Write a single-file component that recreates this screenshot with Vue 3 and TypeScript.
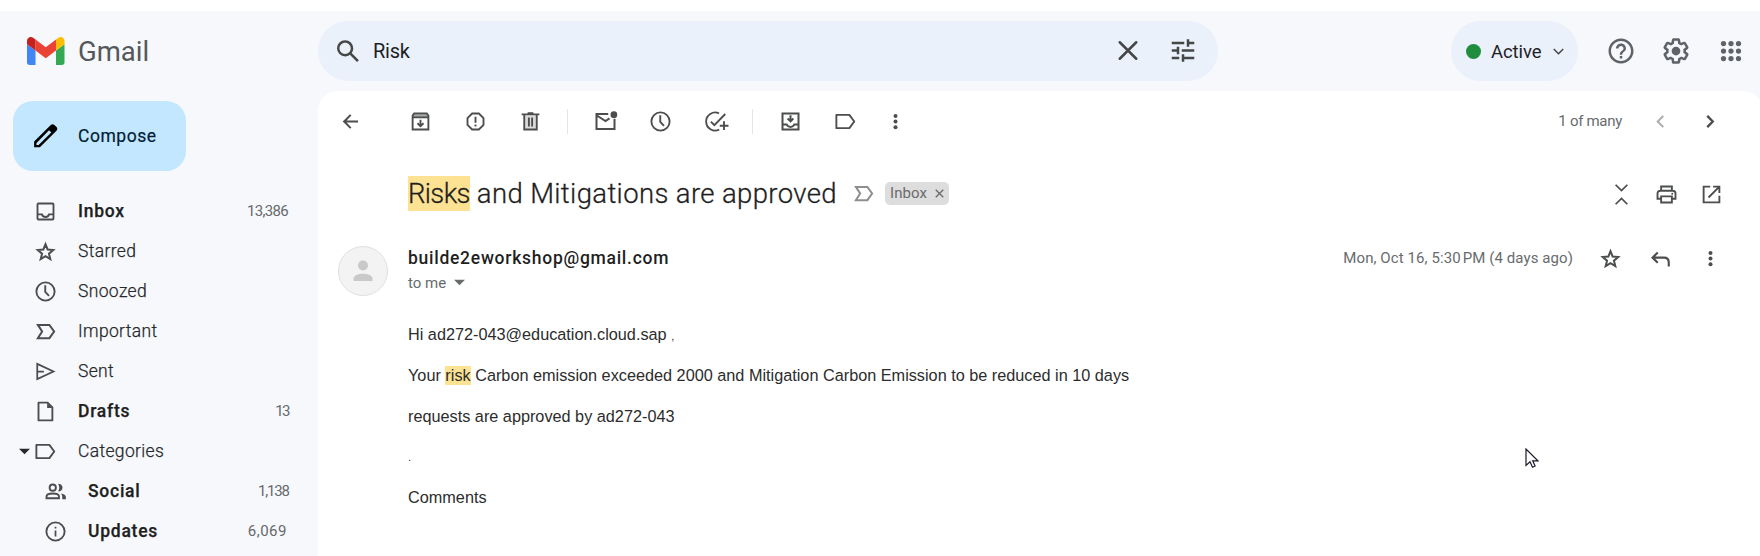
<script setup lang="ts">
import { h, type FunctionalComponent } from 'vue'

const stroke = (inner: string, w = 1.5) =>
  `<g fill="none" stroke="currentColor" stroke-width="${w}">${inner}</g>`

// Small glyphs are drawn on a 20-unit grid, header glyphs on a 24-unit grid.
const small: Record<string, string> = {
  inbox: stroke('<rect x="3.6" y="3.6" width="12.8" height="12.8" rx=".8"/><path d="M3.6 12.3h3.6c.4 1.4 1.4 2.1 2.8 2.1s2.4-.7 2.8-2.1h3.6"/>'),
  star: stroke('<path d="M10 4.2l1.7 4.2 4.5.35-3.45 2.95 1.1 4.4L10 13.7l-3.85 2.4 1.1-4.4L3.8 8.75l4.5-.35z"/>', 1.6),
  clock: stroke('<circle cx="10" cy="10" r="7.3"/><path d="M9.8 5v5.3l3 3.2"/>'),
  important: stroke('<path d="M3.9 4.7h9.2l3.8 5.3-3.8 5.3H3.9L7.3 10z"/>', 1.6),
  sent: stroke('<path d="M3.4 3.9L16.4 10 3.4 16.1zM3.4 10h5.3"/>', 1.4),
  draft: stroke('<path d="M4.4 2.9h7.3l3.8 3.8v10.4H4.4z" stroke-linejoin="round"/><path d="M11.3 2.9v4.2h4.2z" fill="currentColor" stroke="none"/>'),
  label: stroke('<path d="M2.7 4.7h10.4l3.9 5.3-3.9 5.3H2.7z" stroke-linejoin="round"/>'),
  people: stroke('<circle cx="7.8" cy="6.9" r="2.5"/><path d="M2.8 15.4v-1.3c0-1.7 2.7-2.5 5-2.5s5 .8 5 2.5v1.3z"/>') + '<path d="M12.1 3.8c2 0 3.5 1.3 3.5 3.1s-1.5 3.1-3.5 3.1c1.2-1.9 1.2-4.3 0-6.2zM14.3 11.6c2.4.4 4 1.3 4 2.7v1.8h-2.9v-1.8c0-1.1-.4-2-1.1-2.7z" fill="currentColor"/>',
  info: stroke('<circle cx="10" cy="10" r="7.3"/>') + '<path d="M9.3 9.2h1.4V14H9.3zM9.3 6.2h1.4v1.4H9.3z" fill="currentColor"/>',
  back: stroke('<path d="M16 10H4.8M10.2 4.7L4.9 10l5.3 5.3"/>', 1.6),
  archive: '<path d="M3.6 5l1-1.7h10.8l1 1.7v1.5H3.6z" fill="currentColor" opacity=".5"/>' + stroke('<path d="M3.7 5.2l1.3-1.7h10l1.3 1.7v11.2H3.7zM3.7 6.7h12.6M10 8.5v5M7.6 11.4L10 13.7l2.4-2.3"/>', 1.5),
  spam: stroke('<path d="M7.3 3.6h5.4l3.7 3.7v5.4l-3.7 3.7H7.3l-3.7-3.7V7.3z"/><path d="M10 6.2v4.8M10 12.4v1.5"/>', 1.5),
  trash: '<path d="M5 5h10v11H5z" fill="currentColor" opacity=".2"/>' + stroke('<path d="M2.9 4.3h14.2M7.7 3.4h4.6M5 4.3v12.1h10V4.3M8.7 6.7v7.2M11.3 6.7v7.2"/>', 1.5),
  unread: stroke('<path d="M12.2 4H2.8v12h14.4V7.7M2.8 5l7.2 4.6L13.2 7.5"/>', 1.6) + '<circle cx="16.7" cy="4.5" r="2.7" fill="currentColor"/>',
  task: stroke('<path d="M12.8 3.5A7.2 7.2 0 1 0 13 16.4M6.3 10.1l2.8 2.8L17.8 4M16.8 9.8v7M13.4 13.4h7"/>', 1.5),
  move: stroke('<rect x="3.6" y="3.6" width="12.8" height="12.8"/><path d="M3.6 12.4h3.4c.5 1.3 1.5 1.9 3 1.9s2.5-.6 3-1.9h3.4M10 4.9v4.5M7.7 7.6L10 9.8l2.3-2.2"/>', 1.6),
  more: '<g fill="currentColor"><circle cx="10" cy="5.5" r="1.6"/><circle cx="10" cy="10" r="1.6"/><circle cx="10" cy="14.5" r="1.6"/></g>',
  prev: stroke('<path d="M12.2 5.5L7.8 10l4.4 4.5"/>', 1.7),
  next: stroke('<path d="M7.4 5.5l4.4 4.5L7.4 14.5"/>', 1.9),
  collapse: stroke('<path d="M5.3 2.2L10 6.9l4.7-4.7M5.3 17.8L10 13.1l4.7 4.7"/>', 1.4),
  print: stroke('<path d="M5.7 7V3.6h8.6V7M5.7 13.4H2.8V9.2C2.8 7.9 3.7 7 5 7h10c1.3 0 2.2.9 2.2 2.2v4.2h-2.9M5.7 11.5h8.6v4.9H5.7z"/>', 1.5) + '<circle cx="14.6" cy="9.3" r=".8" fill="currentColor"/>',
  open: stroke('<path d="M9 3.7H3.7v12.6h12.6V11M11.3 3.7h5v5M16.3 3.7L7.6 12.4"/>', 1.5),
  reply: stroke('<path d="M7.8 5.2L3.6 9.3l4.2 4.1M3.6 9.3h9.2c2.3 0 3.8 1.5 3.8 3.8v3.2"/>', 1.7),
  caret: '<path d="M5.6 7.8h8.8L10 12.2z" fill="currentColor"/>',
  times: stroke('<path d="M7 7l6 6M13 7l-6 6"/>', 1.1),
  chevron: stroke('<path d="M6.2 8l3.8 3.8L13.8 8"/>', 1.2),
}

const large: Record<string, string> = {
  search: '<path d="M20.49 19l-5.73-5.73C15.53 12.2 16 10.91 16 9.5A6.5 6.5 0 1 0 9.5 16c1.41 0 2.7-.47 3.77-1.24L19 20.49 20.49 19zM5 9.5C5 7.01 7.01 5 9.5 5S14 7.01 14 9.5 11.99 14 9.5 14 5 11.99 5 9.5z" transform="translate(.2 .3)"/>',
  close: '<path d="M5.4 5l13.2 13.2M18.6 5L5.4 18.2" fill="none" stroke="currentColor" stroke-width="2" stroke-linecap="round"/>',
  tune: '<path d="M3 17v2h6v-2H3zM3 5v2h10V5H3zm10 16v-2h8v-2h-8v-2h-2v6h2zM7 9v2H3v2h4v2h2V9H7zm14 4v-2H11v2h10zm-6-4h2V7h4V5h-4V3h-2v6z" transform="translate(0 -.4)"/>',
  help: '<path d="M11 18h2v-2h-2v2zm1-16C6.48 2 2 6.48 2 12s4.48 10 10 10 10-4.48 10-10S17.52 2 12 2zm0 18c-4.41 0-8-3.59-8-8s3.59-8 8-8 8 3.59 8 8-3.59 8-8 8zm0-14c-2.21 0-4 1.79-4 4h2c0-1.1.9-2 2-2s2 .9 2 2c0 2-3 1.75-3 5h2c0-2.25 3-2.5 3-5 0-2.21-1.79-4-4-4z"/>',
  settings: '<path d="M13.85 22.25h-3.7c-.74 0-1.36-.54-1.45-1.27l-.27-1.89c-.27-.14-.53-.29-.79-.46l-1.8.72c-.7.26-1.47-.03-1.81-.65L2.2 15.53c-.35-.66-.2-1.44.36-1.88l1.53-1.19c-.01-.15-.02-.3-.02-.46 0-.15.01-.31.02-.46l-1.52-1.19c-.59-.45-.74-1.26-.37-1.88l1.85-3.19c.34-.62 1.11-.9 1.79-.63l1.81.73c.26-.17.52-.32.78-.46l.27-1.91c.09-.7.71-1.25 1.44-1.25h3.7c.74 0 1.36.54 1.45 1.27l.27 1.89c.27.14.53.29.79.46l1.8-.72c.71-.26 1.48.03 1.82.65l1.84 3.18c.36.66.2 1.44-.36 1.88l-1.52 1.19c.01.15.02.3.02.46s-.01.31-.02.46l1.52 1.19c.56.45.72 1.23.37 1.86l-1.86 3.22c-.34.62-1.11.9-1.8.63l-1.8-.72c-.26.17-.52.32-.78.46l-.27 1.91c-.1.68-.72 1.22-1.46 1.22zm-3.23-2h2.76l.37-2.55.53-.22c.44-.18.88-.44 1.34-.78l.45-.34 2.38.96 1.38-2.4-2.03-1.58.07-.56c.03-.26.06-.51.06-.78s-.03-.53-.06-.78l-.07-.56 2.03-1.58-1.39-2.4-2.39.96-.45-.35c-.42-.32-.87-.58-1.33-.77l-.52-.22-.37-2.55h-2.76l-.37 2.55-.53.21c-.44.19-.88.44-1.34.79l-.45.33-2.38-.95-1.39 2.39 2.03 1.58-.07.56a7 7 0 0 0-.06.79c0 .26.02.53.06.78l.07.56-2.03 1.58 1.38 2.4 2.39-.96.45.35c.43.33.86.58 1.33.77l.53.22.38 2.55z"/><circle cx="12" cy="12" r="3.5"/>',
  apps: [6, 12, 18].map(y => [6, 12, 18].map(x => `<circle cx="${x}" cy="${y}" r="2.1"/>`).join('')).join(''),
}

const Icon: FunctionalComponent<{ name: string; size?: number }> = (props) => {
  const isLarge = props.name in large
  const px = props.size ?? (isLarge ? 30 : 25)
  return h('svg', {
    width: px,
    height: px,
    viewBox: isLarge ? '0 0 24 24' : '0 0 20 20',
    fill: 'currentColor',
    overflow: 'visible',
    innerHTML: isLarge ? large[props.name] : small[props.name],
  })
}
Icon.props = ['name', 'size']

interface Folder {
  icon: string
  label: string
  count?: string
  countTracking?: number
  bold?: boolean
  nested?: boolean
  open?: boolean
}

const folders: Folder[] = [
  { icon: 'inbox', label: 'Inbox', count: '13,386', countTracking: -0.65, bold: true },
  { icon: 'star', label: 'Starred' },
  { icon: 'clock', label: 'Snoozed' },
  { icon: 'important', label: 'Important' },
  { icon: 'sent', label: 'Sent' },
  { icon: 'draft', label: 'Drafts', count: '13', countTracking: -1.5, bold: true },
  { icon: 'label', label: 'Categories', open: true },
  { icon: 'people', label: 'Social', count: '1,138', countTracking: -1.2, bold: true, nested: true },
  { icon: 'info', label: 'Updates', count: '6,069', countTracking: 0.5, bold: true, nested: true },
]
</script>

<template>
  <div class="app">
    <header class="header">
      <div class="brand">
        <svg class="logo" viewBox="52 42 88 66" preserveAspectRatio="none">
          <path fill="#4285f4" d="M58 108h14V74L52 59v43c0 3.32 2.69 6 6 6" />
          <path fill="#34a853" d="M120 108h14c3.32 0 6-2.69 6-6V59l-20 15" />
          <path fill="#fbbc04" d="M120 48v26l20-15v-8c0-7.42-8.47-11.65-14.4-7.2" />
          <path fill="#ea4335" d="M72 74V48l24 18 24-18v26L96 92" />
          <path fill="#c5221f" d="M52 51v8l20 15V48l-5.6-4.2c-5.94-4.45-14.4-.22-14.4 7.2" />
        </svg>
        <span class="wordmark">Gmail</span>
      </div>
      <div class="search">
        <Icon name="search" />
        <span class="query">Risk</span>
        <Icon name="close" class="clear" />
        <Icon name="tune" />
      </div>
      <div class="status">
        <i class="dot"></i>
        <span class="status-text">Active</span>
        <Icon name="chevron" />
      </div>
      <div class="tools">
        <Icon name="help" /><Icon name="settings" /><Icon name="apps" />
      </div>
    </header>

    <div class="body">
      <nav class="sidebar">
        <button class="compose">
          <svg width="30" height="30" viewBox="0 0 24 24">
            <path fill="#000" d="M20.4 4.8L18.7 3.1c-.8-.8-2.1-.8-2.9 0L2.5 16.4V21h4.6L20.4 7.7c.8-.8.8-2.1 0-2.9z" />
            <path fill="#c2e7ff" d="M6.1 19.2H4.4v-1.7L14.5 7.4l1.7 1.7z" />
          </svg>
          <span>Compose</span>
        </button>
        <div v-for="f in folders" :key="f.label" class="folder" :class="{ bold: f.bold, nested: f.nested }">
          <Icon v-if="f.open" name="caret" class="expander" />
          <Icon :name="f.icon" class="folder-icon" />
          <span class="name">{{ f.label }}</span>
          <span
            v-if="f.count"
            class="count"
            :style="{ letterSpacing: `${f.countTracking}px`, marginRight: `${f.countTracking}px` }"
          >{{ f.count }}</span>
        </div>
      </nav>

      <main class="main">
        <div class="toolbar">
          <Icon name="back" class="go-back" />
          <div class="group"><Icon name="archive" /><Icon name="spam" /><Icon name="trash" /></div>
          <div class="group"><Icon name="unread" /><Icon name="clock" /><Icon name="task" /></div>
          <div class="group"><Icon name="move" /><Icon name="label" /><Icon name="more" class="kebab" /></div>
          <span class="pager">1 of many</span>
          <Icon name="prev" class="prev" />
          <Icon name="next" class="next" />
        </div>

        <div class="subject">
          <h1><mark>Risks</mark> and Mitigations are approved</h1>
          <Icon name="important" class="marker" />
          <span class="chip"><span>Inbox</span><Icon name="times" /></span>
          <div class="actions"><Icon name="collapse" /><Icon name="print" /><Icon name="open" /></div>
        </div>

        <div class="sender">
          <div class="avatar">
            <svg width="20" height="22" viewBox="0 0 20 22" fill="#c9c9c9">
              <circle cx="10" cy="5.5" r="5" /><path d="M.5 21v-2.5c0-3 5-4.8 9.5-4.8s9.5 1.8 9.5 4.8V21z" />
            </svg>
          </div>
          <div class="who">
            <div class="from">builde2eworkshop@gmail.com</div>
            <div class="to"><span>to me</span><Icon name="caret" /></div>
          </div>
          <span class="date">Mon, Oct 16, 5:30&#8239;PM (4 days ago)</span>
          <div class="mail-tools"><Icon name="star" /><Icon name="reply" /><Icon name="more" /></div>
        </div>

        <div class="message">
          <p>Hi ad272-043@education.cloud.sap <small>,</small></p>
          <p>Your <mark>risk</mark> Carbon emission exceeded 2000 and Mitigation Carbon Emission to be reduced in 10 days</p>
          <p>requests are approved by ad272-043</p>
          <p class="minor"><small>.</small></p>
          <p>Comments</p>
        </div>
      </main>
    </div>

    <svg class="pointer" width="14" height="22" viewBox="0 0 14 22">
      <path d="M1 1v16.500l4-3.700 2.500 5.400 2.600-1.200-2.400-5.200h5.200z" fill="#fff" stroke="#1a1a2a" stroke-width="1.200" />
    </svg>
  </div>
</template>

<style>
body { margin: 0; overflow: hidden; background: #fff; }
</style>

<style scoped>
.app {
  position: relative;
  box-sizing: border-box;
  width: 1760px;
  height: 556px;
  padding-top: 11px;
  overflow: hidden;
  font-family: Roboto, "Liberation Sans", sans-serif;
  color: #4b4e4d;
  background: linear-gradient(#fff 11px, #f6f8fc 11px);
}
svg { display: block; flex: none; }
.header { display: flex; align-items: center; height: 80px; color: #444746; }
.brand { display: flex; align-items: center; width: 291px; padding-left: 27px; }
.logo { width: 37.5px; height: 28px; }
.wordmark { margin-left: 13.5px; font-size: 27.5px; color: #55585a; }
.search {
  display: flex; align-items: center; box-sizing: border-box;
  width: 900px; height: 60px; padding: 0 20px 0 15px;
  border-radius: 30px; background: #eaf1fb;
}
.query { flex: 1; margin-left: 10px; font-size: 20px; letter-spacing: -.25px; color: #1f1f1f; }
.clear { margin-right: 25px; }
.status {
  display: flex; align-items: center; box-sizing: border-box;
  width: 127px; height: 60px; margin-left: 233px; padding-left: 15px;
  border-radius: 30px; background: #eaf1fb;
}
.dot { width: 15px; height: 15px; border-radius: 50%; background: #1e8e3e; }
.status-text { width: 53px; margin: 1px 1.5px 0 10px; font-size: 18.5px; letter-spacing: -.1px; color: #1f1f1f; }
.tools { display: flex; gap: 25px; margin-left: 28px; color: #5f6368; }

.body { display: flex; height: 465px; }
.sidebar { width: 318px; flex: none; box-sizing: border-box; padding-top: 10px; }
.compose {
  display: flex; align-items: center; width: 173px; height: 70px;
  margin: 0 0 20px 13px; padding: 0 0 0 18px; border: 0; border-radius: 20px;
  background: #c2e7ff; color: #001d35; font: 400 17.5px Roboto, sans-serif; letter-spacing: .55px;
  -webkit-text-stroke: .2px;
}
.compose span { margin-left: 17px; }
.folder { position: relative; display: flex; align-items: center; height: 40px; padding: 0 30.5px 0 33px; font-size: 17.5px; color: #26282a; }
.folder.nested { padding-left: 43px; }
.folder-icon { color: #4b4e4d; }
.name { margin-left: 20px; font-weight: 300; letter-spacing: .35px; -webkit-text-stroke: .25px; }
.bold .name { font-weight: 500; letter-spacing: .75px; color: #1f1f1f; }
.expander { position: absolute; left: 12px; }
.count { margin-left: auto; font-size: 15px; color: #66696c; }

.main { flex: 1; min-width: 0; margin-right: -3px; border-radius: 20px 20px 0 0; background: #fff; }
.toolbar { display: flex; align-items: center; height: 60px; padding-left: 20px; }
.go-back { margin-right: 27.5px; }
.group { display: flex; align-items: center; gap: 30px; padding: 0 24.5px 0 17px; }
.group + .group { border-left: 1px solid #e3e5e8; height: 25px; padding-left: 25px; padding-right: 24px; }
.kebab { margin-left: -5px; }
.pager { margin-left: auto; font-size: 15px; letter-spacing: -.3px; color: #686b6d; }
.prev { margin-left: 26px; opacity: .45; }
.next { margin: 0 40px 0 25px; }

.subject { display: flex; align-items: center; height: 84px; padding: 0 0 2px 90px; }
h1 {
  width: 430px; margin: 0; font-size: 27.5px; line-height: 35px; font-weight: 300;
  letter-spacing: .37px; color: #1f1f1f; white-space: nowrap; -webkit-text-stroke: .3px;
}
mark { display: inline-block; background: #fde293; color: inherit; }
h1 mark { letter-spacing: -.65px; }
.marker { margin-left: 12.5px; color: #8e8e8e; }
.chip {
  display: flex; align-items: center; box-sizing: border-box; width: 64px; height: 23px;
  margin-left: 9.5px; padding-left: 5px; border-radius: 5px; background: #ddd; color: #6a6a6a;
  font-size: 15px; letter-spacing: .1px;
}
.chip svg { margin-left: -.5px; }
.actions { display: flex; gap: 20px; margin: 2px 39px 0 auto; }

.sender { display: flex; height: 68px; padding: 9px 0 0 20px; }
.avatar {
  display: grid; place-items: center; box-sizing: border-box; width: 50px; height: 50px;
  border: 1px solid #e0e0e0; border-radius: 50%; background: #f3f3f3;
}
.who { margin-left: 20px; }
.from { height: 24px; line-height: 24px; font-size: 17.5px; font-weight: 500; letter-spacing: .73px; color: #1f1f1f; }
.to { display: flex; align-items: center; height: 25px; font-size: 15px; color: #686b6d; }
.to svg { margin-left: 1px; }
.date { height: 24px; margin-left: auto; line-height: 25px; font-size: 15px; letter-spacing: .09px; color: #686b6d; }
.mail-tools { display: flex; gap: 25px; margin: 0 40px 0 25px; }

.message { padding: 11px 0 0 90px; font: 16.25px/19px "Liberation Sans", Arial, sans-serif; color: #2c2c2c; }
.message p { margin: 0 0 22px; height: 19px; }
.message p.minor { height: 18px; line-height: 14px; }
.message small { font-size: 11px; }
.pointer { position: absolute; left: 1525px; top: 448px; }
</style>
